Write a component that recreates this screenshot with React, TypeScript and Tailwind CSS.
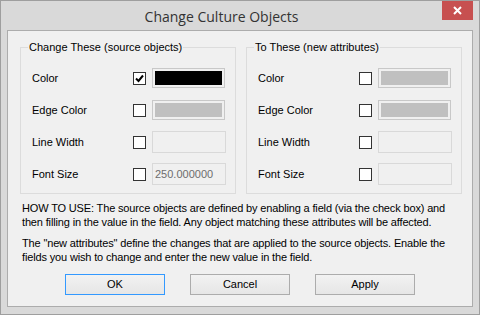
import React from "react";

type Field = "black" | "gray" | "empty" | "text";

type Row = {
  label: string;
  checked: boolean;
  field: Field;
  value?: string;
};

function CheckBox({ checked }: { checked: boolean }) {
  return (
    <div className="flex h-[13px] w-[13px] items-center justify-center border border-[#333333] bg-white">
      {checked && (
        <svg width="9" height="9" viewBox="0 0 9 9">
          <path d="M1 4.5 L3.5 7 L8 1.5" fill="none" stroke="#000" strokeWidth="2" />
        </svg>
      )}
    </div>
  );
}

function ValueField({ field, value }: { field: Field; value?: string }) {
  if (field === "black" || field === "gray") {
    return (
      <div className="h-[20px] w-[73px] border border-[#c8c8c8] bg-[#f0f0f0] p-[2px]">
        <div className={field === "black" ? "h-full w-full bg-black" : "h-full w-full bg-[#c0c0c0]"} />
      </div>
    );
  }
  return (
    <div className="flex h-[22px] w-[74px] items-center border border-[#d9d9d9] bg-[#f0f0f0] px-[2px] text-[#6d6d6d]">
      {value}
    </div>
  );
}

function Group({ title, rows }: { title: string; rows: Row[] }) {
  return (
    <fieldset className="h-[153px] w-[216px] border border-[#dcdcdc] px-0 pb-0">
      <legend className="ml-[7px] px-[1px] leading-[13px]">{title}</legend>
      <div className="flex flex-col pl-[11px] pt-[8px]">
        {rows.map((row) => (
          <div key={row.label} className="flex h-[32px] items-center">
            <span className="w-[101px]">{row.label}</span>
            <CheckBox checked={row.checked} />
            <div className="ml-[6px]">
              <ValueField field={row.field} value={row.value} />
            </div>
          </div>
        ))}
      </div>
    </fieldset>
  );
}

function DialogButton({ label, focused }: { label: string; focused?: boolean }) {
  return (
    <button
      className={
        focused
          ? "h-[21px] w-[100px] border border-[#3399ff] bg-gradient-to-b from-[#f2f2f2] to-[#e6e6e6] text-black"
          : "h-[21px] w-[100px] border border-[#acacac] bg-gradient-to-b from-[#f2f2f2] to-[#e6e6e6] text-black"
      }
    >
      {label}
    </button>
  );
}

export default function App() {
  const sourceRows: Row[] = [
    { label: "Color", checked: true, field: "black" },
    { label: "Edge Color", checked: false, field: "gray" },
    { label: "Line Width", checked: false, field: "empty" },
    { label: "Font Size", checked: false, field: "text", value: "250.000000" },
  ];

  const targetRows: Row[] = [
    { label: "Color", checked: false, field: "gray" },
    { label: "Edge Color", checked: false, field: "gray" },
    { label: "Line Width", checked: false, field: "empty" },
    { label: "Font Size", checked: false, field: "empty" },
  ];

  return (
    <div className="flex h-[315px] w-[480px] flex-col border border-[#9e9e9e] bg-[#d9d9d9] font-['Liberation_Sans',sans-serif] text-[11px] text-black">
      {/* Title bar */}
      <div className="flex h-[29px] items-start">
        <div className="flex-1 pt-[5px] text-center font-['Open_Sans',sans-serif] text-[14px] text-[#333333]">
          Change Culture Objects
        </div>
        <div className="mr-[6px] flex h-[19px] w-[31px] items-center justify-center bg-[#c75050]">
          <svg width="9" height="9" viewBox="0 0 9 9">
            <path d="M1 1 L8 8 M8 1 L1 8" stroke="#fff" strokeWidth="2" />
          </svg>
        </div>
      </div>

      {/* Client area */}
      <div className="mx-[6px] mb-[7px] flex flex-1 flex-col border border-[#acacac] bg-[#f0f0f0]">
        <div className="flex gap-[10px] pl-[12px] pt-[10px]">
          <Group title="Change These (source objects)" rows={sourceRows} />
          <Group title="To These (new attributes)" rows={targetRows} />
        </div>

        <div className="flex flex-col gap-[7px] pl-[14px] pr-[12px] pt-[7px] leading-[14px] tracking-[-0.15px]">
          <p>
            HOW TO USE: The source objects are defined by enabling a field (via the check box) and then filling in the
            value in the field. Any object matching these attributes will be affected.
          </p>
          <p>
            The "new attributes" define the changes that are applied to the source objects. Enable the fields you wish to
            change and enter the new value in the field.
          </p>
        </div>

        <div className="flex gap-[25px] pl-[57px] pt-[10px]">
          <DialogButton label="OK" focused />
          <DialogButton label="Cancel" />
          <DialogButton label="Apply" />
        </div>
      </div>
    </div>
  );
}
